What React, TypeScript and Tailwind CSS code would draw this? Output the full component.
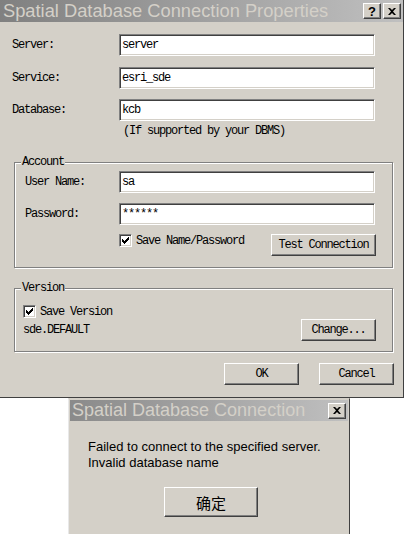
import React from "react";

const mono =
  "font-['Liberation_Mono',monospace] text-[12px] leading-[12px] tracking-[-1.2px] text-black whitespace-nowrap";
const sans = "font-['Liberation_Sans',Arial,sans-serif]";

const Field: React.FC<{ value: string }> = ({ value }) => (
  <div className="flex h-[22px] w-[256px] items-center border border-t-[#808080] border-l-[#808080] border-b-white border-r-white bg-white pl-[2px] shadow-[inset_1px_1px_0_#404040,inset_-1px_-1px_0_#d4d0c8]">
    <span className={mono}>{value}</span>
  </div>
);

const Btn: React.FC<{ className?: string; children: React.ReactNode }> = ({ className = "", children }) => (
  <button
    className={`flex items-center justify-center border border-t-white border-l-white border-b-[#404040] border-r-[#404040] bg-[#d4d0c8] shadow-[inset_-1px_-1px_0_#808080] ${className}`}
  >
    {children}
  </button>
);

const Check: React.FC = () => (
  <div className="flex h-[13px] w-[13px] shrink-0 items-center justify-center border border-t-[#808080] border-l-[#808080] border-b-white border-r-white bg-white shadow-[inset_1px_1px_0_#404040,inset_-1px_-1px_0_#d4d0c8]">
    <svg width="7" height="7" viewBox="0 0 7 7">
      <path d="M0 2h1v1h1v1h1V3h1V2h1V1h1V0h1v3H6v1H5v1H4v1H3v1H2V6H1V5H0z" fill="#000" />
    </svg>
  </div>
);

const Group: React.FC<{ title: string; className?: string; children: React.ReactNode }> = ({
  title,
  className = "",
  children,
}) => (
  <div
    className={`relative ml-[14px] w-[379px] border border-[#808080] shadow-[1px_1px_0_#fff,inset_1px_1px_0_#fff] ${className}`}
  >
    <span className={`absolute -top-[7px] left-[6px] bg-[#d4d0c8] px-[1px] ${mono}`}>{title}</span>
    {children}
  </div>
);

const CloseGlyph: React.FC = () => (
  <svg width="8" height="7" viewBox="0 0 8 7">
    <path d="M0 0h2l2 2 2-2h2L5 3.5 8 7H6L4 5 2 7H0l3-3.5z" fill="#000" />
  </svg>
);

const TitleBtn: React.FC<{ children: React.ReactNode }> = ({ children }) => (
  <Btn className="h-[16px] w-[18px]">{children}</Btn>
);

const Row: React.FC<{ label: string; value: string; className?: string }> = ({ label, value, className = "" }) => (
  <div className={`flex items-center ${className}`}>
    <span className={`${mono}`}>{label}</span>
    <div className="ml-auto">
      <Field value={value} />
    </div>
  </div>
);

export default function App() {
  return (
    <div className="h-[534px] w-[406px] overflow-hidden bg-white">
      {/* main dialog */}
      <div className="h-[398px] w-[404px] bg-[#d4d0c8] border-r border-b border-r-[#404040] border-b-[#404040]">
        <div className="flex h-[22px] items-center justify-between bg-linear-to-r from-[#808080] to-[#c0c0c0] pl-[3px] pr-[2px]">
          <span className={`${sans} text-[18.3px] leading-[22px] text-[#d4d0c8] whitespace-nowrap`}>
            Spatial Database Connection Properties
          </span>
          <div className="flex gap-[2px]">
            <TitleBtn>
              <span className={`${sans} text-[13px] font-bold leading-[13px]`}>?</span>
            </TitleBtn>
            <TitleBtn>
              <CloseGlyph />
            </TitleBtn>
          </div>
        </div>

        <div className="w-[375px] pl-[12px]">
          <Row label="Server:" value="server" className="mt-[12px]" />
          <Row label="Service:" value="esri_sde" className="mt-[11px]" />
          <Row label="Database:" value="kcb" className="mt-[10px]" />
        </div>
        <div className={`ml-[123px] mt-[4px] h-[12px] ${mono}`}>(If supported by your DBMS)</div>

        <Group title="Account" className="mt-[25px] pt-[8px] pb-[11px]">
          <div className="w-[360px] pl-[10px]">
            <Row label="User Name:" value="sa" />
            <Row label="Password:" value="******" className="mt-[10px]" />
          </div>
          <div className="mt-[9px] flex items-start pl-[104px] pr-[16px]">
            <div className="flex items-center">
              <Check />
              <span className={`ml-[4px] ${mono}`}>Save Name/Password</span>
            </div>
            <Btn className="ml-auto h-[22px] w-[105px]">
              <span className={mono}>Test Connection</span>
            </Btn>
          </div>
        </Group>

        <Group title="Version" className="mt-[20px] pt-[16px] pb-[10px]">
          <div className="flex items-center pl-[8px]">
            <Check />
            <span className={`ml-[4px] ${mono}`}>Save Version</span>
          </div>
          <div className="mt-[1px] flex h-[22px] items-center pl-[8px] pr-[16px]">
            <span className={mono}>sde.DEFAULT</span>
            <Btn className="ml-auto h-[22px] w-[75px]">
              <span className={mono}>Change...</span>
            </Btn>
          </div>
        </Group>

        <div className="ml-[224px] mt-[11px] flex gap-[20px]">
          <Btn className="h-[22px] w-[75px]">
            <span className={mono}>OK</span>
          </Btn>
          <Btn className="h-[22px] w-[75px]">
            <span className={mono}>Cancel</span>
          </Btn>
        </div>
      </div>

      {/* error message box */}
      <div className="ml-[68px] h-[140px] w-[282px] border border-t-[#d4d0c8] border-l-[#e8e8e8] border-r-[#404040] bg-[#d4d0c8] p-[1px]">
        <div className="flex h-[21px] items-center justify-between bg-linear-to-r from-[#8a8a8a] to-[#c0c0c0] pl-[2px] pr-[2px]">
          <span className={`${sans} text-[18px] leading-[21px] text-[#d4d0c8] whitespace-nowrap`}>
            Spatial Database Connection
          </span>
          <TitleBtn>
            <CloseGlyph />
          </TitleBtn>
        </div>
        <div className={`pl-[18px] pt-[18px] ${sans} text-[13px] leading-[16px] text-black`}>
          <div>Failed to connect to the specified server.</div>
          <div>Invalid database name</div>
        </div>
        <Btn className="ml-[94px] mt-[16px] h-[30px] w-[94px]">
          <span className="font-['Noto_Sans_CJK_SC',sans-serif] text-[15px] leading-[15px] text-black">确定</span>
        </Btn>
      </div>
    </div>
  );
}
